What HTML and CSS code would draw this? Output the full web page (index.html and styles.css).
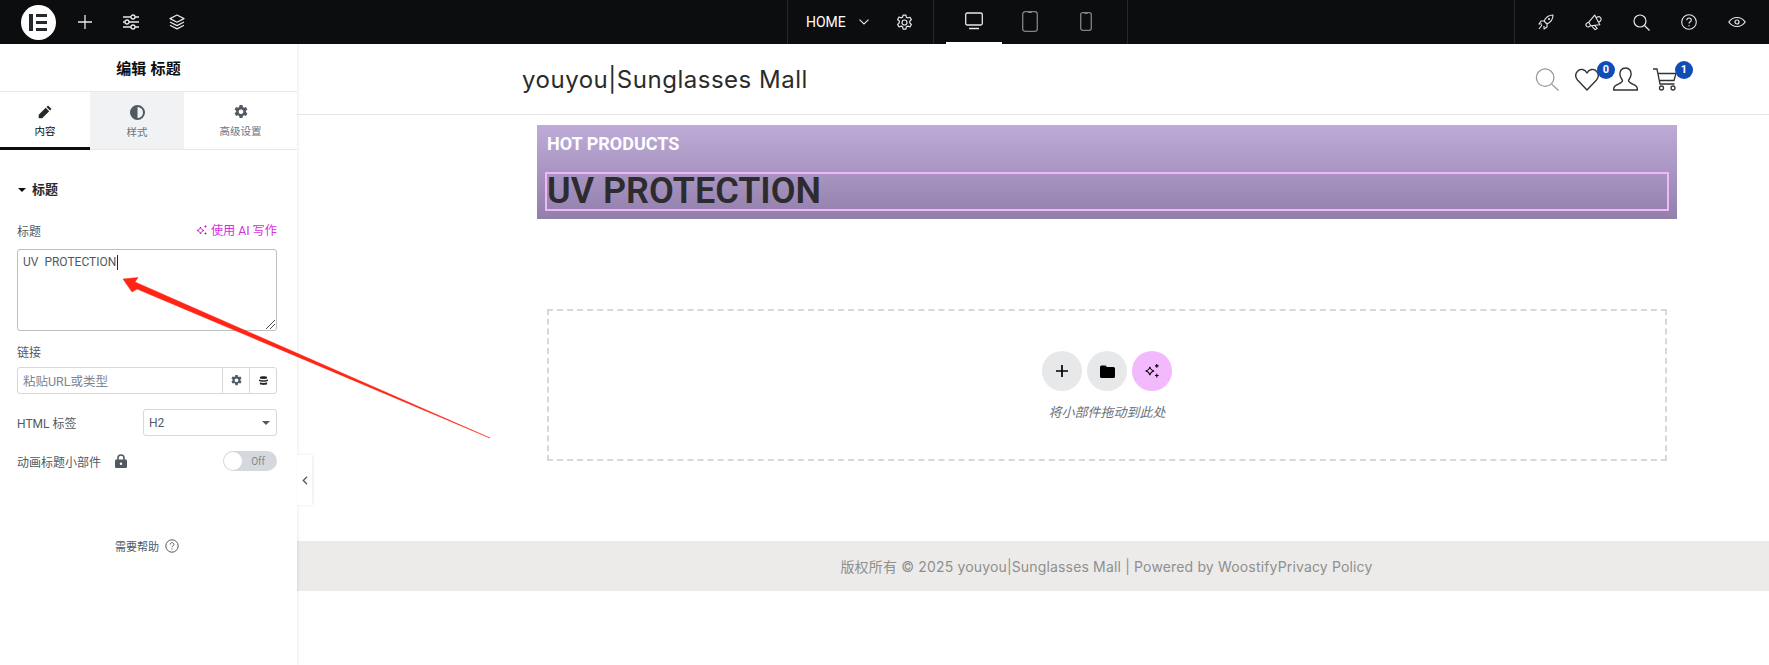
FILE: index.html
```html
<!DOCTYPE html>
<html lang="zh">
<head>
<meta charset="utf-8">
<title>编辑 标题</title>
<link rel="stylesheet" href="styles.css">
</head>
<body>
<header class="topbar">
  <div class="tb-left">
    <div class="e-logo"><svg width="19" height="17" viewBox="0 0 19 17"><path d="M0 0h4v17H0zM7 0h11v3H7zM7 7h11v3H7zM7 14h11v3H7z" fill="#26292c"/></svg></div>
    <svg class="tb-ic ic-plus" width="16" height="16" viewBox="0 0 16 16"><path d="M8 1v14M1 8h14" stroke="#e6e8ea" stroke-width="1.3" fill="none"/></svg>
    <svg class="tb-ic ic-sliders" width="18" height="16" viewBox="0 0 18 16" fill="none" stroke="#e6e8ea" stroke-width="1.3"><path d="M1 3h8M13 3h4M1 8h2M7 8h10M1 13h8M13 13h4"/><circle cx="11" cy="3" r="2"/><circle cx="5" cy="8" r="2"/><circle cx="11" cy="13" r="2"/></svg>
    <svg class="tb-ic ic-layers" width="16" height="16" viewBox="0 0 16 16" fill="none" stroke="#e6e8ea" stroke-width="1.2" stroke-linejoin="round"><path d="M8 1l7 3.6-7 3.6-7-3.6zM1 8l7 3.6L15 8M1 11.3l7 3.6 7-3.6"/></svg>
  </div>
  <div class="tb-doc">
    <span class="tb-home">HOME</span>
    <svg class="ic-chev" width="10" height="6" viewBox="0 0 10 6"><path d="M.5.7L5 5l4.500-4.300" stroke="#e6e8ea" stroke-width="1.100" fill="none"/></svg>
    <svg class="ic-gear" width="17" height="17" viewBox="0 0 24 24" fill="none" stroke="#e6e8ea" stroke-width="1.700" stroke-linejoin="round"><circle cx="12" cy="12" r="3.500"/><path d="M10 1.500h4l.7 3.200 2 1 3-1.200 2 3.500-2.300 2.200v2.400l2.300 2.200-2 3.500-3-1.200-2 1-.7 3.200h-4l-.7-3.200-2-1-3 1.200-2-3.500 2.300-2.200V9.900L2.300 7.700l2-3.500 3 1.200 2-1z"/></svg>
  </div>
  <div class="tb-dev">
    <div class="dev is-active"><svg width="18" height="18" viewBox="0 0 18 18" fill="none" stroke="#e6e8ea" stroke-width="1.300"><rect x=".7" y="1" width="16.600" height="12" rx="1.500"/><path d="M4 16.500h10" stroke-width="1.500"/></svg></div>
    <div class="dev"><svg width="16" height="21" viewBox="0 0 16 21" fill="none" stroke="#80848a" stroke-width="1.300"><rect x=".7" y=".7" width="14.600" height="19.600" rx="2.500"/><path d="M6 1h4" stroke-width="2"/></svg></div>
    <div class="dev"><svg width="12" height="19" viewBox="0 0 12 19" fill="none" stroke="#80848a" stroke-width="1.300"><rect x=".7" y=".7" width="10.600" height="17.600" rx="2"/><path d="M4.500 1h3" stroke-width="2"/></svg></div>
  </div>
  <div class="tb-spacer"></div>
  <div class="tb-right">
    <svg width="16" height="16" viewBox="0 0 16 16" fill="none" stroke="#e6e8ea" stroke-width="1.100" stroke-linejoin="round"><path d="M15 1c-4 0-7 2-9 6l3 3c4-2 6-5 6-9zM6 7H3L1 10h3M9 10v3l-3 2v-3M4 11l-3 4M11 4.500a.5.5 0 1 0 .01 0"/></svg>
    <svg width="17" height="17" viewBox="0 0 17 17" fill="none" stroke="#e6e8ea" stroke-width="1.100" stroke-linejoin="round"><g transform="rotate(-28 8.500 8.500)"><path d="M4.500 6L13 2.500v11L4.500 10zM4.500 6H2.500a2 2 0 0 0 0 4h2zM5 10l1.500 5.500h2.500L8 11.200M13 5.500h1.500a2.500 2.500 0 0 1 0 5H13"/></g></svg>
    <svg width="17" height="17" viewBox="0 0 17 17" fill="none" stroke="#e6e8ea" stroke-width="1.200"><circle cx="7" cy="7" r="6"/><path d="M11.500 11.500L16.500 16.500"/></svg>
    <svg width="16" height="16" viewBox="0 0 16 16" fill="none" stroke="#e6e8ea" stroke-width="1.100"><circle cx="8" cy="8" r="7.300"/><path d="M5.800 6.200c0-3 4.500-3 4.500 0 0 1.600-2.300 1.600-2.300 3.300M8 11v1.200"/></svg>
    <svg width="18" height="12" viewBox="0 0 18 12" fill="none" stroke="#e6e8ea" stroke-width="1.200"><path d="M.8 6C5 0 13 0 17.200 6 13 12 5 12 .8 6z"/><circle cx="9" cy="6" r="2"/></svg>
  </div>
</header>

<div class="main">
  <aside class="panel">
    <div class="panel-title">编辑 标题</div>
    <nav class="tabs">
      <div class="tab tab-a is-current">
        <svg width="14" height="14" viewBox="0 0 14 14"><path d="M10 .5l3.500 3.500-1.500 1.500L8.500 2zM7.700 2.800l3.500 3.500-7 7H.7V9.800z" fill="#26292c"/></svg>
        <span>内容</span>
      </div>
      <div class="tab tab-b">
        <svg width="15" height="15" viewBox="0 0 15 15"><circle cx="7.500" cy="7.500" r="6.500" fill="none" stroke="#515962" stroke-width="2"/><path d="M7.500 1a6.500 6.500 0 0 0 0 13z" fill="#515962"/></svg>
        <span>样式</span>
      </div>
      <div class="tab tab-c">
        <svg width="14" height="14" viewBox="0 0 24 24"><path fill="#515962" fill-rule="evenodd" d="M9.500 0h5l.7 3.400 2 1.100 3.300-1.100 2.500 4.300-2.600 2.300v2.100l2.600 2.300-2.500 4.300-3.300-1.100-2 1.100-.7 3.400h-5l-.7-3.400-2-1.100-3.300 1.100L1 14.300 3.600 12V9.900L1 7.700l2.500-4.300 3.300 1.100 2-1.100zM12 7.500a4 4 0 1 0 .01 0z"/></svg>
        <span>高级设置</span>
      </div>
    </nav>
    <div class="section-head"><i class="caret"></i><span>标题</span></div>
    <div class="controls">
      <div class="row-between lab-row">
        <span class="label">标题</span>
        <span class="ai-link"><svg width="12" height="12" viewBox="0 0 12 12" fill="none" stroke="#d004d4" stroke-width="1"><path d="M4.500 3C5 5 6 6 8 6.500 6 7 5 8 4.500 10 4 8 3 7 1 6.500 3 6 4 5 4.500 3z"/><path d="M9.500 1.500v2M8.500 2.500h2M9.500 8.500v2M8.500 9.500h2"/></svg>使用 AI 写作</span>
      </div>
      <div class="textarea">
        <span class="ta-text">UV&nbsp; PROTECTION</span><i class="cursor"></i>
        <svg class="grip" width="9" height="9" viewBox="0 0 9 9"><path d="M0 9L9 0M4 9l5-5" stroke="#555" stroke-width="1"/></svg>
      </div>
      <div class="label link-label">链接</div>
      <div class="url-box">
        <span class="url-ph">粘贴URL或类型</span>
        <span class="url-btn"><svg width="11" height="11" viewBox="0 0 24 24"><path fill="#515962" fill-rule="evenodd" d="M9.500 0h5l.7 3.400 2 1.100 3.300-1.100 2.500 4.300-2.600 2.300v2.100l2.600 2.300-2.500 4.300-3.300-1.100-2 1.100-.7 3.400h-5l-.7-3.400-2-1.100-3.300 1.100L1 14.300 3.600 12V9.900L1 7.700l2.500-4.300 3.300 1.100 2-1.100zM12 7.500a4 4 0 1 0 .01 0z"/></svg></span>
        <span class="url-btn"><svg width="9" height="11" viewBox="0 0 10 11"><path fill="#26292c" d="M1 1.500C1 .5 9 .5 9 1.500V3C9 4 1 4 1 3zM0 4.500c2 1 8 1 10 0V6c-2 1.200-8 1.200-10 0zM1 7.500c2 1 6 1 8 0V9.500c0 1.300-8 1.300-8 0z"/></svg></span>
      </div>
      <div class="row-between tag-row">
        <span class="label">HTML 标签</span>
        <div class="select"><span>H2</span><i class="sel-caret"></i></div>
      </div>
      <div class="row-between anim-row">
        <span class="label anim-label">动画标题小部件
          <svg width="12" height="14" viewBox="0 0 12 14"><path d="M3 6V4a3 3 0 0 1 6 0v2" fill="none" stroke="#515962" stroke-width="1.600"/><rect y="5.500" width="12" height="8.500" rx="1.200" fill="#515962"/><circle cx="6" cy="9.700" r="1.200" fill="#fff"/></svg>
        </span>
        <div class="toggle"><i class="knob"></i><span>Off</span></div>
      </div>
    </div>
    <div class="help"><span>需要帮助</span><svg width="14" height="14" viewBox="0 0 14 14" fill="none" stroke="#515962" stroke-width="1"><circle cx="7" cy="7" r="6.200"/><path d="M5.200 5.500c0-2.500 3.700-2.500 3.700 0 0 1.300-1.900 1.300-1.900 2.700M7 9.300v1.100"/></svg></div>
    <div class="collapse"><svg width="6" height="9" viewBox="0 0 6 9"><path d="M5 .8L1.300 4.500 5 8.200" fill="none" stroke="#515962" stroke-width="1.300"/></svg></div>
  </aside>

  <main class="canvas">
    <div class="site-header">
      <div class="site-logo">youyou|Sunglasses Mall</div>
      <div class="site-icons">
        <svg class="si-search" width="24" height="25" viewBox="0 0 26 26" fill="none" stroke="#999" stroke-width="1.400"><circle cx="11" cy="11" r="9.500"/><path d="M18 18l7.500 7"/></svg>
        <span class="si si-heart"><svg width="24" height="23" viewBox="0 0 24 23" fill="none" stroke="#333" stroke-width="1.400" stroke-linejoin="round"><path d="M12 22L2.500 12C-2 6.500 3 .8 7.500 1.500 9.500 1.800 11 3 12 5c1-2 2.500-3.200 4.500-3.500C21 .8 26 6.500 21.500 12z"/></svg><b class="badge">0</b></span>
        <svg class="si-user" width="25" height="24" viewBox="0 0 25 24" fill="none" stroke="#333" stroke-width="1.400" stroke-linejoin="round"><path d="M12.500 1c-4 0-6 3-5.500 7 .3 2.500 2 4 2.500 5.500 0 2.500-5 3.500-7.500 5.500-1 1-1.500 2.500-1.500 4h24c0-1.500-.5-3-1.500-4-2.500-2-7.500-3-7.500-5.500.5-1.500 2.200-3 2.500-5.500.5-4-1.500-7-5.500-7z"/></svg>
        <span class="si si-cart"><svg width="24" height="23" viewBox="0 0 24 23" fill="none" stroke="#333" stroke-width="1.300"><path d="M0 1h4l3 15h14.500M5 5.500h18l-2 7H6.500"/><circle cx="8.500" cy="20" r="2"/><circle cx="20" cy="20" r="2"/></svg><b class="badge">1</b></span>
      </div>
    </div>
    <section class="banner">
      <div class="hot">HOT PRODUCTS</div>
      <h2 class="uv">UV PROTECTION</h2>
    </section>
    <section class="dropzone">
      <div class="dz-btns">
        <span class="dz-btn"><svg width="12" height="12" viewBox="0 0 12 12"><path d="M6 0v12M0 6h12" stroke="#000" stroke-width="1.700"/></svg></span>
        <span class="dz-btn"><svg width="15" height="13" viewBox="0 0 15 13"><path d="M0 2a1.500 1.500 0 0 1 1.500-1.500h4L7 2h6.500A1.500 1.500 0 0 1 15 3.500v8a1.500 1.500 0 0 1-1.500 1.500h-12A1.500 1.500 0 0 1 0 11.500z" fill="#000"/></svg></span>
        <span class="dz-btn dz-ai"><svg width="16" height="16" viewBox="0 0 15 15" fill="none" stroke="#000" stroke-width="1"><path d="M5.500 3.500C6 6 7 7 9.500 7.500 7 8 6 9 5.500 11.500 5 9 4 8 1.500 7.500 4 7 5 6 5.500 3.500z"/><path d="M12 1v3.500M10.300 2.700h3.400M12 10v3.500M10.300 11.700h3.400"/></svg></span>
      </div>
      <div class="dz-text">将小部件拖动到此处</div>
    </section>
    <footer class="site-footer">版权所有 © 2025 youyou|Sunglasses Mall | Powered by WoostifyPrivacy Policy</footer>
  </main>
</div>

<svg class="arrow" width="380" height="170" viewBox="0 0 380 170"><path d="M1 9L16 7.500 13 12 368 168 15 19 10 22z" fill="#ff2415" stroke="#ff2415" stroke-width=".5" stroke-linejoin="round"/></svg>
</body>
</html>
```

FILE: styles.css
```css
* { box-sizing: border-box; }
html, body { margin: 0; padding: 0; }
body {
  position: relative;
  width: 1769px;
  height: 665px;
  overflow: hidden;
  background: #fff;
  font-family: Roboto, "Noto Sans CJK SC", sans-serif;
  color: #515962;
}
svg { display: block; flex: none; }

/* top bar */
.topbar {
  display: flex;
  height: 44px;
  background: #0c0d0e;
  color: #fff;
}
.tb-left {
  width: 787px;
  display: flex;
  align-items: center;
  padding-left: 21px;
}
.e-logo {
  width: 35px;
  height: 35px;
  border-radius: 50%;
  background: #fff;
  display: flex;
  align-items: center;
  justify-content: center;
  margin-right: 21px;
}
.ic-sliders { margin-left: 29px; }
.ic-layers { margin-left: 29px; }
.tb-doc {
  width: 147px;
  display: flex;
  align-items: center;
  padding-left: 18px;
  border-left: 1px solid #26292c;
  border-right: 1px solid #26292c;
}
.tb-home { font-size: 14px; font-weight: 400; }
.ic-chev { margin-left: 13px; }
.ic-gear { margin-left: 27px; }
.tb-dev {
  display: flex;
  width: 194px;
  padding-left: 12px;
  border-right: 1px solid #26292c;
}
.dev {
  width: 56px;
  height: 44px;
  display: flex;
  align-items: center;
  justify-content: center;
  padding-bottom: 2px;
}
.is-active { border-bottom: 2px solid #fff; padding-bottom: 0; }
.tb-spacer { flex: 1; }
.tb-right {
  width: 255px;
  display: flex;
  align-items: center;
  justify-content: space-between;
  padding: 0 23px 0 23px;
  border-left: 1px solid #26292c;
}

/* layout */
.main { display: flex; height: 621px; }

/* panel */
.panel {
  position: relative;
  width: 297px;
  flex: none;
  background: #fff;
  box-shadow: 1px 0 3px rgba(0, 0, 0, .08);
  z-index: 2;
}
.panel-title {
  height: 48px;
  display: flex;
  align-items: center;
  justify-content: center;
  font-size: 15px;
  font-weight: 700;
  letter-spacing: .2px;
  color: #0c0d0e;
  border-bottom: 1px solid #e6e8ea;
}
.tabs {
  display: flex;
  height: 58px;
  border-bottom: 1px solid #e6e8ea;
}
.tab {
  display: flex;
  flex-direction: column;
  align-items: center;
  padding-top: 13px;
  gap: 6px;
  font-size: 10.500px;
  color: #69727d;
}
.tab span { line-height: 14px; }
.tab-a { width: 90px; }
.tab-b { width: 94px; background: #f1f2f3; }
.tab-c { width: 113px; }
.is-current { color: #0c0d0e; border-bottom: 3px solid #0c0d0e; margin-bottom: -1px; height: 58px; }
.section-head {
  display: flex;
  align-items: center;
  gap: 6px;
  padding: 30px 0 0 18px;
  font-size: 13px;
  font-weight: 700;
  color: #26292c;
  line-height: 20px;
}
.caret {
  width: 0;
  height: 0;
  border: 4px solid transparent;
  border-top: 4px solid #0c0d0e;
  border-bottom: 0;
}
.controls { padding: 0 20px 0 17px; margin-top: 21px; }
.row-between { display: flex; justify-content: space-between; align-items: center; }
.label { font-size: 12px; color: #515962; }
.lab-row { height: 18px; }
.ai-link {
  display: flex;
  align-items: center;
  gap: 3px;
  font-size: 12.200px;
  color: #d82ee0;
}
.textarea {
  position: relative;
  display: flex;
  align-items: flex-start;
  height: 82px;
  margin-top: 10px;
  padding: 5px 5px;
  border: 1px solid #babfc5;
  border-radius: 3px;
  font-size: 12px;
  line-height: 14px;
  color: #515962;
}
.cursor { width: 1px; height: 15px; background: #26292c; margin-left: 1px; }
.grip { position: absolute; right: 1px; bottom: 1px; }
.link-label { margin-top: 13px; line-height: 18px; }
.url-box {
  display: flex;
  height: 27px;
  margin-top: 5px;
  border: 1px solid #d5d8dc;
  border-radius: 3px;
  font-size: 12.500px;
  align-items: center;
  color: #7d858f;
}
.url-ph { flex: 1; padding-left: 5px; }
.url-btn {
  width: 27px;
  height: 100%;
  display: flex;
  align-items: center;
  justify-content: center;
  border-left: 1px solid #d5d8dc;
}
.tag-row { margin-top: 15px; }
.select {
  width: 134px;
  height: 27px;
  display: flex;
  align-items: center;
  justify-content: space-between;
  padding: 0 6px 0 5px;
  border: 1px solid #d5d8dc;
  border-radius: 3px;
  font-size: 12px;
  color: #515962;
}
.sel-caret {
  width: 0;
  height: 0;
  border: 4px solid transparent;
  border-top: 4px solid #515962;
  border-bottom: 0;
}
.anim-row { margin-top: 15px; height: 20px; }
.anim-label { display: flex; align-items: center; gap: 14px; }
.toggle {
  width: 54px;
  height: 20px;
  display: flex;
  align-items: center;
  justify-content: space-between;
  padding: 0 12px 0 1px;
  background: #d5d8dc;
  border-radius: 10px;
  font-size: 10px;
  color: #818a96;
}
.knob {
  width: 18px;
  height: 18px;
  border-radius: 50%;
  background: #fff;
}
.help {
  display: flex;
  justify-content: center;
  align-items: center;
  gap: 6px;
  margin-top: 67px;
  padding-right: 3px;
  font-size: 11px;
  color: #515962;
}
.collapse {
  position: absolute;
  left: 297px;
  top: 411px;
  width: 15px;
  height: 50px;
  display: flex;
  align-items: center;
  justify-content: center;
  background: #fff;
  box-shadow: 1px 0 3px rgba(0, 0, 0, .08);
}

/* canvas */
.canvas { flex: 1; min-width: 0; }
.site-header {
  height: 71px;
  display: flex;
  align-items: center;
  justify-content: space-between;
  padding: 0 92px 0 225px;
  border-bottom: 1px solid #e6e6e6;
}
.site-logo {
  font-family: Inter, sans-serif;
  font-size: 24px;
  color: #2b2b2b;
  letter-spacing: .52px;
}
.site-icons { display: flex; align-items: center; }
.si-search { margin-right: 16px; }
.si { position: relative; display: block; }
.si-user { margin-left: 14px; }
.si-cart { margin-left: 15px; }
.badge {
  position: absolute;
  right: -16px;
  top: -7px;
  width: 18px;
  height: 18px;
  border-radius: 50%;
  background: #0f4cb5;
  color: #fff;
  font-size: 11px;
  line-height: 18px;
  font-weight: 700;
  text-align: center;
}
.banner {
  width: 1140px;
  height: 94px;
  margin: 10px 0 0 240px;
  padding: 8px 8px 0 8px;
  background: linear-gradient(#bfabd8, #927fab);
}
.hot {
  font-size: 18px;
  font-weight: 700;
  line-height: 22px;
  color: #fff;
  padding-left: 2px;
}
.uv {
  height: 39px;
  margin: 17px 0 0 0;
  border: 2px solid #f0b8fb;
  padding-left: 0;
  font-size: 36px;
  line-height: 35px;
  font-weight: 600;
  color: #2d2b2e;
}
.dropzone {
  width: 1120px;
  height: 152px;
  margin: 90px 0 0 250px;
  border: 2px dashed #d5d8dc;
  padding-top: 40px;
  display: flex;
  flex-direction: column;
  align-items: center;
}
.dz-btns { display: flex; gap: 5px; }
.dz-btn {
  width: 40px;
  height: 40px;
  border-radius: 50%;
  background: #e6e8ea;
  display: flex;
  align-items: center;
  justify-content: center;
}
.dz-ai { background: #f2b9fc; }
.dz-text {
  margin-top: 13px;
  font-size: 13px;
  font-style: italic;
  color: #69727d;
  line-height: 18px;
}
.site-footer {
  height: 50px;
  margin-top: 80px;
  padding-left: 147px;
  background: #ecebe9;
  display: flex;
  align-items: center;
  justify-content: center;
  font-family: Inter, "Noto Sans CJK SC", sans-serif;
  font-size: 14px;
  letter-spacing: .16px;
  color: #8f8f8f;
}

/* annotation arrow */
.arrow {
  position: absolute;
  left: 122px;
  top: 270px;
  z-index: 5;
}
```
